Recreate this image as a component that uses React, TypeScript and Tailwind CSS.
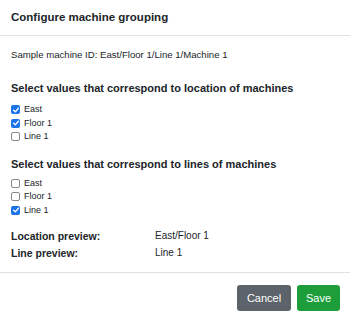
const font = { fontFamily: '"Liberation Sans", Arial, sans-serif' };

type Option = { label: string; checked: boolean };

function CheckList({ options }: { options: Option[] }) {
  return (
    <div className="flex flex-col">
      {options.map((o) => (
        <label key={o.label} className="flex h-[13.5px] items-center gap-[4px] text-[9px] text-[#212529]">
          {o.checked ? (
            <span className="flex h-[9px] w-[9px] items-center justify-center rounded-[2px] bg-[#1a73e8]">
              <svg viewBox="0 0 10 10" className="h-[8px] w-[8px]">
                <path d="M2 5.2 L4.2 7.3 L8 2.8" fill="none" stroke="white" strokeWidth="1.7" strokeLinecap="round" strokeLinejoin="round" />
              </svg>
            </span>
          ) : (
            <span className="h-[9px] w-[9px] rounded-[2px] border border-[#8a8a8a] bg-white" />
          )}
          <span>{o.label}</span>
        </label>
      ))}
    </div>
  );
}

export default function App() {
  return (
    <div className="h-[319px] w-[350px] bg-white text-[#212529]" style={font}>
      <div className="flex h-[36px] items-center border-b border-[#dee2e6] px-[11px]">
        <h5 className="text-[11.5px] font-bold">Configure machine grouping</h5>
      </div>

      <div className="px-[11px] pt-[12px]">
        <p className="text-[9.6px] leading-[14px]">Sample machine ID: East/Floor 1/Line 1/Machine 1</p>

        <h6 className="mt-[18px] text-[11px] font-bold leading-[16px]">
          Select values that correspond to location of machines
        </h6>
        <div className="mt-[7px]">
          <CheckList
            options={[
              { label: "East", checked: true },
              { label: "Floor 1", checked: true },
              { label: "Line 1", checked: false },
            ]}
          />
        </div>

        <h6 className="mt-[12px] text-[11px] font-bold leading-[16px]">
          Select values that correspond to lines of machines
        </h6>
        <div className="mt-[5px]">
          <CheckList
            options={[
              { label: "East", checked: false },
              { label: "Floor 1", checked: false },
              { label: "Line 1", checked: true },
            ]}
          />
        </div>

        <div className="mt-[11px] grid grid-cols-[144px_1fr] leading-[16.5px]">
          <span className="text-[10.5px] font-bold">Location preview:</span>
          <span className="text-[10px]">East/Floor 1</span>
          <span className="text-[10.5px] font-bold">Line preview:</span>
          <span className="text-[10px]">Line 1</span>
        </div>
      </div>

      <div className="mt-[11px] flex justify-end gap-[6px] border-t border-[#dee2e6] pl-[9px] pr-[10px] pt-[12px]">
        <button className="h-[26px] w-[54px] rounded-[3px] bg-[#5c636a] text-[11px] text-white">Cancel</button>
        <button className="h-[26px] w-[43px] rounded-[3px] bg-[#1e9e3a] text-[11px] text-white">Save</button>
      </div>
    </div>
  );
}
